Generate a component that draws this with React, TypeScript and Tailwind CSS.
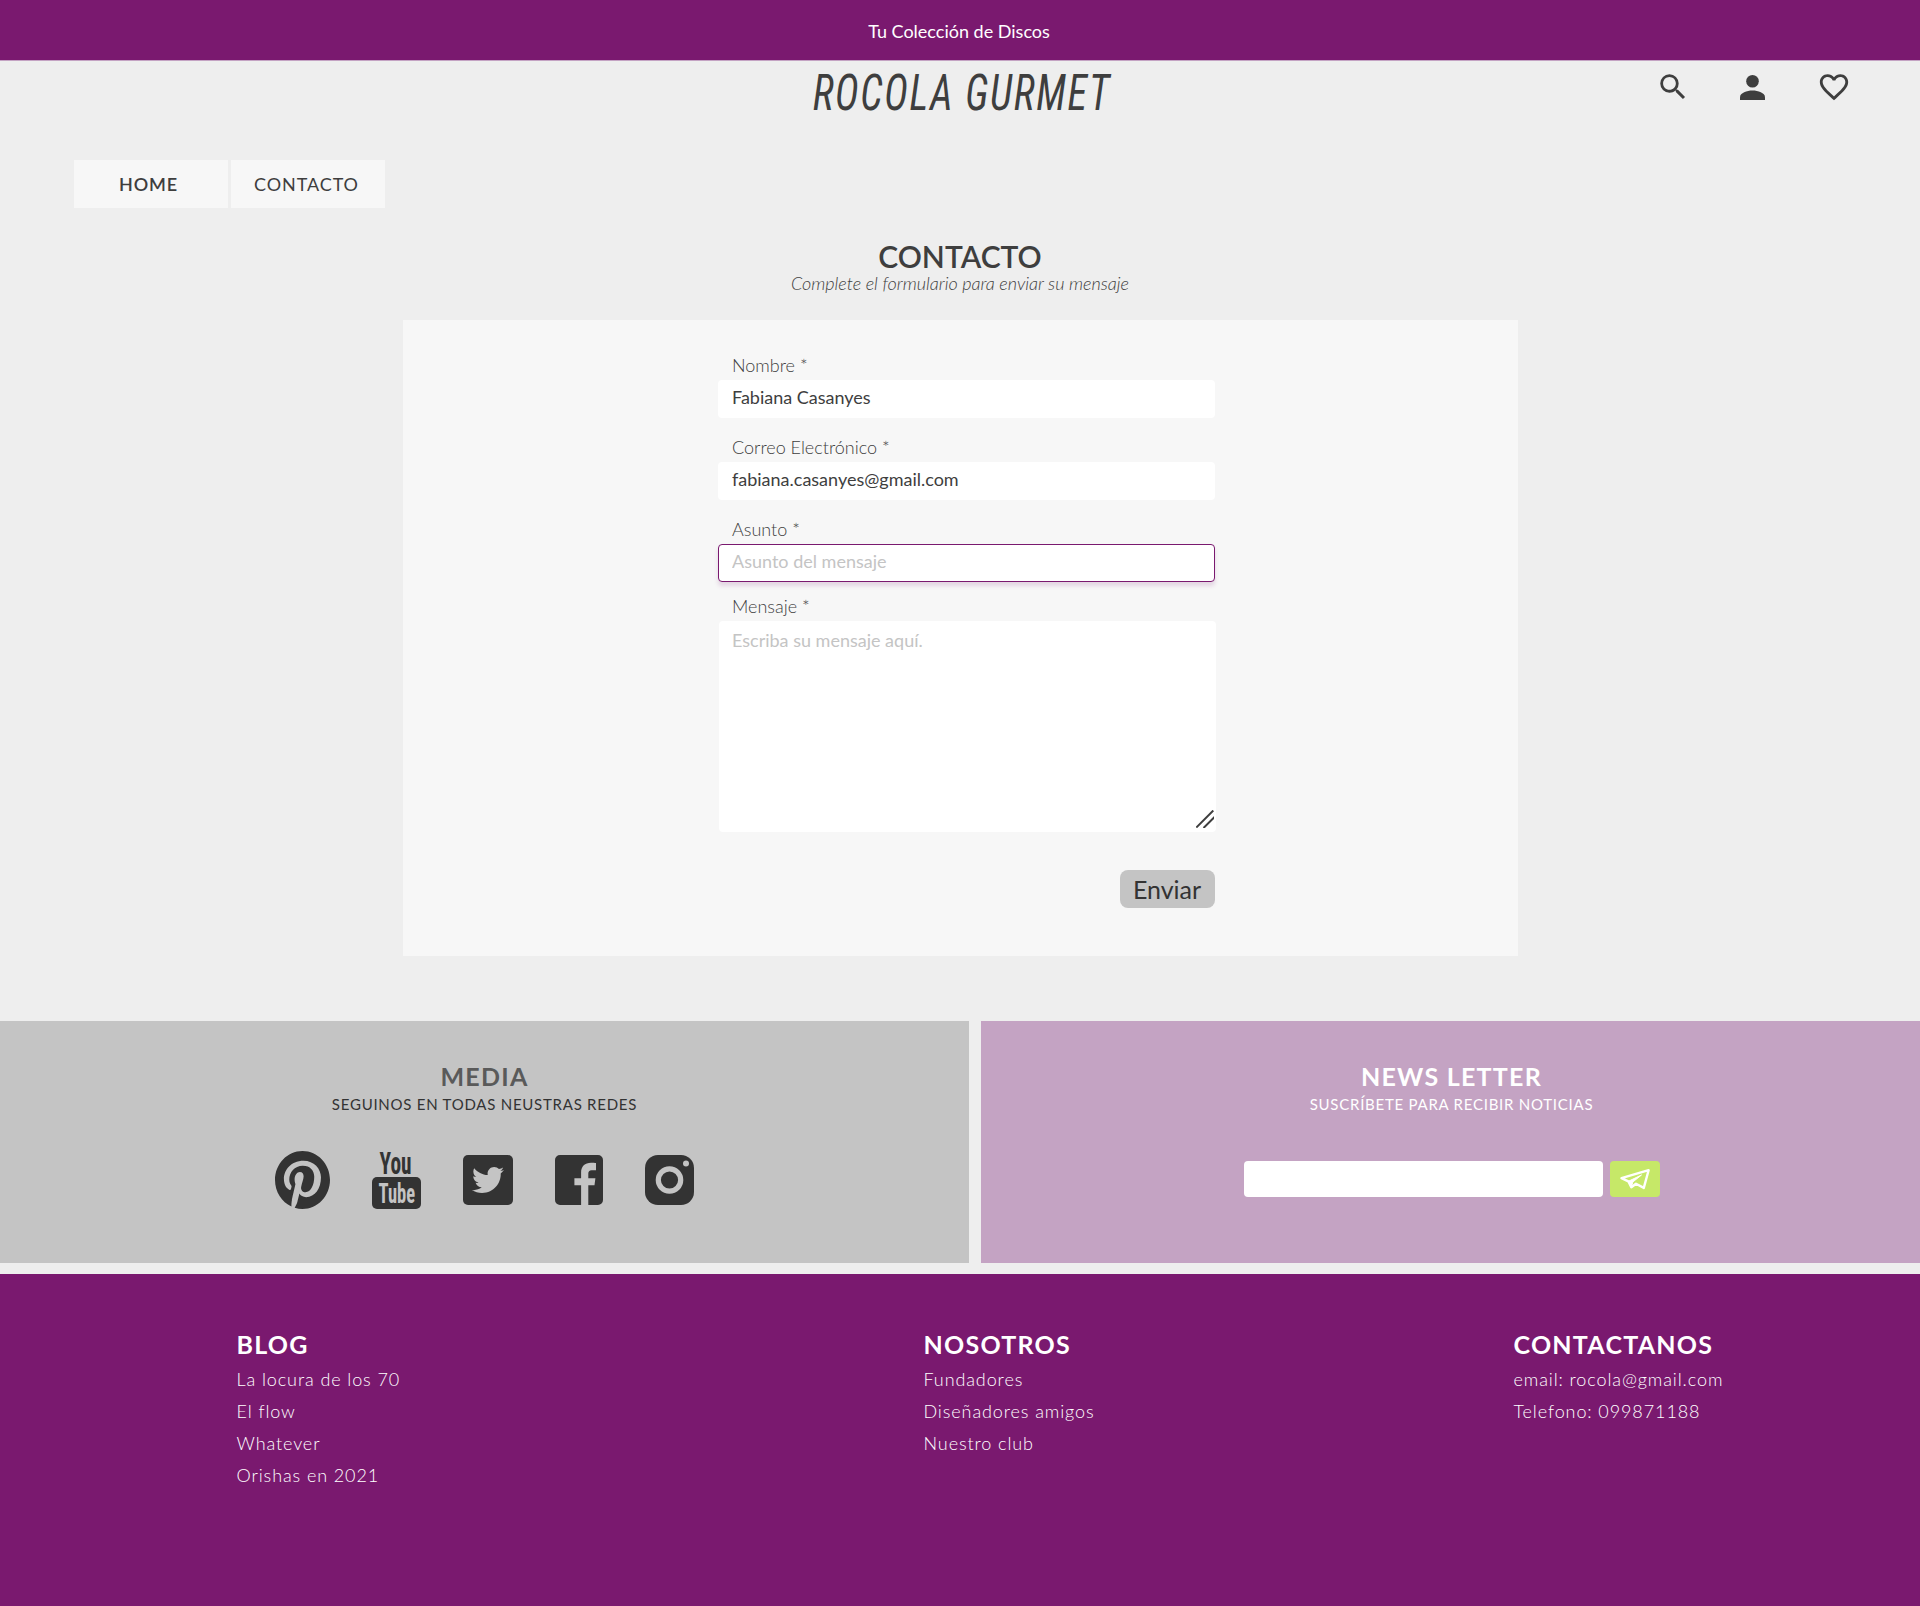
import type { ReactNode } from 'react';
import { TfiPinterestAlt, TfiTwitterAlt } from 'react-icons/tfi';
import { MdFavoriteBorder, MdSearch } from 'react-icons/md';

const footerColumns = [
  {
    title: 'BLOG',
    place: 'w-[687px]',
    items: ['La locura de los 70', 'El flow', 'Whatever', 'Orishas en 2021'],
  },
  {
    title: 'NOSOTROS',
    place: 'w-[590px]',
    items: ['Fundadores', 'Diseñadores amigos', 'Nuestro club'],
  },
  {
    title: 'CONTACTANOS',
    place: 'w-[300px]',
    items: ['email: rocola@gmail.com', 'Telefono: 099871188'],
  },
];

function PersonIcon() {
  return (
    <svg width="25" height="25" viewBox="0 0 25 25" fill="currentColor">
      <circle cx="12.5" cy="6.3" r="6.3" />
      <path d="M0 25v-2.8c0-4.2 7-6.6 12.5-6.6S25 18 25 22.2V25z" />
    </svg>
  );
}

function YoutubeIcon() {
  return (
    <svg
      width="49"
      height="58"
      viewBox="0 0 49 58"
      className="overflow-visible font-['Roboto',sans-serif] font-bold [font-stretch:75%]"
    >
      <text x="7.5" y="23" fontSize="32" textLength="32" lengthAdjust="spacingAndGlyphs" fill="#333333">
        You
      </text>
      <rect y="26" width="49" height="32" rx="5" fill="#333333" />
      <text x="6.5" y="52" fontSize="28" textLength="36.5" lengthAdjust="spacingAndGlyphs" fill="#c4c4c4">
        Tube
      </text>
    </svg>
  );
}

function FacebookIcon() {
  return (
    <svg width="48" height="50" viewBox="0 0 48 50" fill="currentColor">
      <path d="M5 0h38a5 5 0 0 1 5 5v40a5 5 0 0 1-5 5H33.3V30.3h6.2l.9-7H33.3v-4.6c0-2.2 1-3.4 3.3-3.4h4.4V8.1c-1-.2-3-.4-5-.4-6.1 0-9.9 3.6-9.9 9.8v5.8h-6.7v7h6.7V50H5a5 5 0 0 1-5-5V5a5 5 0 0 1 5-5z" />
    </svg>
  );
}

function InstagramIcon() {
  return (
    <svg width="49" height="50" viewBox="0 0 49 50">
      <rect width="49" height="50" rx="13" fill="#333333" />
      <circle cx="24.5" cy="25" r="11.2" fill="none" stroke="#c4c4c4" strokeWidth="5.2" />
      <circle cx="41" cy="8.5" r="3" fill="#c4c4c4" />
    </svg>
  );
}

function PlaneIcon() {
  return (
    <svg width="30" height="21" viewBox="0 0 30 21" fill="none" stroke="#ffffff" strokeLinejoin="round">
      <path d="M28.6 1.2 1.5 9.2 8.3 12.3 11.3 18.3 16 14.8 23.8 18.9Z" strokeWidth="2.4" />
      <path d="M21.5 6 8.3 12.3 11.3 18.3 12.8 13Z" fill="#ffffff" strokeWidth="1" />
    </svg>
  );
}

function Field({ label, children }: { label: string; children: ReactNode }) {
  return (
    <div className="flex flex-col gap-1">
      <label className="pl-3.5 text-[18px] leading-[22px] font-light">{label}</label>
      {children}
    </div>
  );
}

const inputClass =
  'h-[38px] w-full rounded bg-white pr-3.5 pb-1 pl-3.5 text-[18px] outline-none placeholder:text-[#c4c4c4]';

export default function App() {
  return (
    <div className="flex h-[1606px] w-[1920px] flex-col overflow-hidden bg-[#eeeeee] font-['Lato',sans-serif] text-[#3e3e3e]">
      <div className="flex h-[61px] items-center justify-center border-b border-[#c4a3c3] bg-[#7a196f] pt-[3px] pr-0.5 text-[18px] text-white">
        <p>Tu Colección de Discos</p>
      </div>

      <header className="flex h-[99px] items-start">
        <div className="flex-1 pl-[72px]" />
        <h1 className="flex h-[66px] w-[300px] justify-center pt-[3px] font-['Roboto',sans-serif] text-[49px] leading-[60px] font-normal tracking-[2px] whitespace-nowrap italic [font-stretch:75%]">
          <span className="scale-x-[0.825]">ROCOLA GURMET</span>
        </h1>
        <div className="flex flex-1 items-center justify-end pt-[9px] pr-[69px]">
          <MdSearch className="mr-[50px] size-[34px]" />
          <PersonIcon />
          <MdFavoriteBorder className="ml-[52px] size-[34px]" />
        </div>
      </header>

      <nav className="flex h-12 gap-[3px] pl-[74px] text-[18px] tracking-[0.9px]">
        <a className="flex w-[154px] items-center justify-center bg-[#f7f7f7] pr-[5px] font-semibold">HOME</a>
        <a className="flex w-[154px] items-center justify-center bg-[#f7f7f7] pr-[3px]">CONTACTO</a>
      </nav>

      <main className="flex flex-col items-center pt-[30px]">
        <h2 className="text-[30px] leading-9 font-semibold">CONTACTO</h2>
        <p className="-mt-0.5 text-[18px] leading-[22px] font-light italic">
          Complete el formulario para enviar su mensaje
        </p>
        <form className="mt-[26px] ml-px flex h-[636px] w-[1115px] flex-col bg-[#f7f7f7] pt-[34px] pl-[315px]">
          <div className="flex w-[497px] flex-col">
            <Field label="Nombre *">
              <input className={inputClass} defaultValue="Fabiana Casanyes" />
            </Field>
            <div className="h-[18px]" />
            <Field label="Correo Electrónico *">
              <input className={inputClass} defaultValue="fabiana.casanyes@gmail.com" />
            </Field>
            <div className="h-[18px]" />
            <Field label="Asunto *">
              <input
                className="h-[38px] w-full rounded border border-[#7a196f] bg-white pr-3.5 pb-1 pl-[13px] text-[18px] shadow-[0_4px_4px_rgba(122,25,111,0.15)] outline-none placeholder:text-[#c4c4c4]"
                placeholder="Asunto del mensaje"
              />
            </Field>
            <div className="h-[13px]" />
            <Field label="Mensaje *">
              <div className="relative ml-px h-[211px] w-[497px]">
                <textarea
                  className="block size-full resize-none rounded bg-white px-[13px] pt-2 text-[18px] leading-[22px] outline-none placeholder:text-[#c4c4c4]"
                  placeholder="Escriba su mensaje aquí."
                />
                <svg
                  className="absolute right-0.5 bottom-1"
                  width="18"
                  height="18"
                  viewBox="0 0 18 18"
                  fill="none"
                  stroke="#3e3e3e"
                  strokeWidth="2"
                >
                  <path d="M.3 17.5 17.3.5M7.5 18 18.5 7" />
                </svg>
              </div>
            </Field>
            <button
              type="button"
              className="mt-[38px] flex h-[38px] w-[95px] items-center justify-center self-end rounded-lg bg-[#c4c4c4] pt-0.5 pr-px text-[25px] text-[#333333]"
            >
              Enviar
            </button>
          </div>
        </form>
      </main>

      <section className="mt-[65px] flex h-[242px] gap-3">
        <div className="flex w-[969px] flex-col items-center bg-[#c4c4c4] pt-10">
          <h3 className="text-[25px] leading-[30px] font-bold tracking-[1.25px] text-[#5a5a5a]">MEDIA</h3>
          <p className="mt-1 text-[15px] leading-[19px] tracking-[0.75px] text-[#333333]">
            SEGUINOS EN TODAS NEUSTRAS REDES
          </p>
          <div className="mt-[37px] flex h-[58px] items-center gap-[42px] text-[#333333]">
            <TfiPinterestAlt className="h-[58px] w-[55px]" viewBox="0.5 0.5 16 16" preserveAspectRatio="none" />
            <YoutubeIcon />
            <span className="flex h-[50px] w-[50px] items-center justify-center rounded-[5px] bg-[#333333] text-[#c4c4c4]">
              <TfiTwitterAlt className="size-8" />
            </span>
            <FacebookIcon />
            <InstagramIcon />
          </div>
        </div>
        <div className="flex w-[939px] flex-col items-center bg-[#c4a3c3] pt-10 pl-0.5 text-white">
          <h3 className="text-[25px] leading-[30px] font-bold tracking-[1.25px]">NEWS LETTER</h3>
          <p className="mt-1 text-[15px] leading-[19px] tracking-[0.75px]">SUSCRÍBETE PARA RECIBIR NOTICIAS</p>
          <div className="mt-[47px] ml-px flex gap-[7px]">
            <input className="h-9 w-[359px] rounded bg-white px-3 text-[18px] outline-none" />
            <button type="button" className="flex h-9 w-[50px] items-center justify-center rounded bg-[#c6e868]">
              <PlaneIcon />
            </button>
          </div>
        </div>
      </section>

      <footer className="mt-[11px] flex h-[332px] bg-[#7a196f] pt-[55px] pl-[236.5px] text-white">
        {footerColumns.map((column) => (
          <div key={column.title} className={column.place}>
            <h3 className="text-[25px] leading-[30px] font-bold tracking-[1.25px]">{column.title}</h3>
            <ul className="mt-1 text-[18px] leading-8 font-light tracking-[0.9px]">
              {column.items.map((item) => (
                <li key={item}>{item}</li>
              ))}
            </ul>
          </div>
        ))}
      </footer>
    </div>
  );
}
